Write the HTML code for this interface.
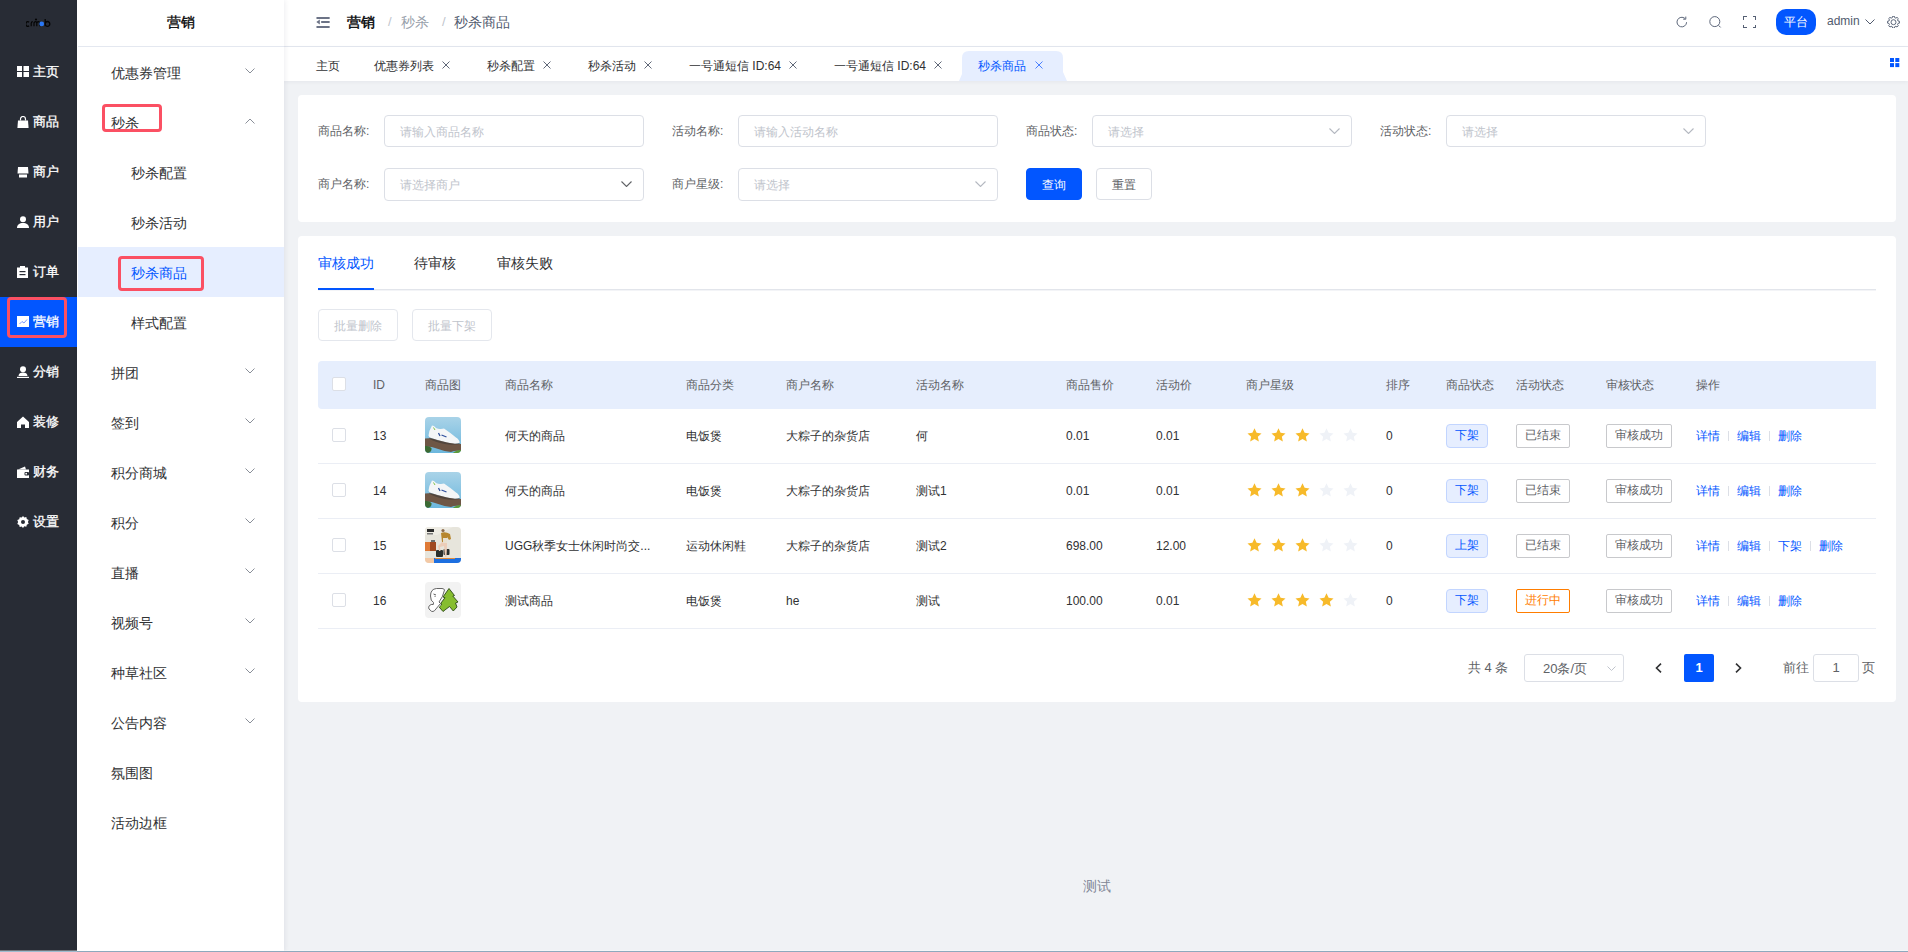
<!DOCTYPE html><html><head><meta charset="utf-8"><style>
*{box-sizing:border-box;margin:0;padding:0}
html,body{width:1908px;height:952px;overflow:hidden;background:#f0f2f5;font-family:"Liberation Sans",sans-serif;color:#303133}
.a{position:absolute;white-space:nowrap;line-height:1}
#nav1{position:absolute;left:0;top:0;width:77px;height:952px;background:#282c35}
#nav2{position:absolute;left:77px;top:0;width:207px;height:952px;background:#fff;box-shadow:1px 0 5px rgba(0,20,50,.07);z-index:2}
#hdr{position:absolute;left:284px;top:0;width:1624px;height:47px;background:#fff;border-bottom:1px solid #e4e8f0}
#tabs{position:absolute;left:284px;top:47px;width:1624px;height:34px;background:#fff;box-shadow:0 1px 4px rgba(0,20,60,.05);z-index:1}
.n1{position:absolute;left:0;width:77px;height:50px}
.n1 .tx{position:absolute;left:33px;top:18px;font-size:13px;color:#fff;line-height:13px;-webkit-text-stroke:0.3px #fff}
.n1 svg{position:absolute;left:17px;top:19px}
.n2{position:absolute;left:0;width:207px;height:50px}
.n2 .tx{position:absolute;left:34px;top:19px;font-size:14px;color:#303133;line-height:14px}
.n2 .sub{left:54px}
.arr{position:absolute;left:168px;top:21px}
.card{position:absolute;left:298px;width:1598px;background:#fff;border-radius:4px}
.lbl{position:absolute;font-size:12px;color:#606266;line-height:12px}
.inp{position:absolute;height:32px;width:260px;border:1px solid #dcdfe6;border-radius:4px;background:#fff}
.inp .ph{position:absolute;left:15px;top:10px;font-size:12px;color:#c0c4cc;line-height:12px}
.inp svg{position:absolute;right:11px;top:12px}
.btn{position:absolute;height:32px;width:56px;border-radius:4px;font-size:12px;line-height:32px;text-align:center}
.t12{position:absolute;font-size:12px;line-height:12px;white-space:nowrap}
.cb{position:absolute;width:14px;height:14px;border:1px solid #dcdfe6;border-radius:2px;background:#fff}
.img{position:absolute;width:36px;height:36px;border-radius:4px;overflow:hidden}
.tag{position:absolute;height:24px;border-radius:2px;font-size:12px;line-height:20px;text-align:center;border:1px solid}
.dv{position:absolute;width:1px;height:10px;background:#dcdfe6}
.rbox{position:absolute;border:3px solid #fb5063;border-radius:4px}
.tb{position:absolute;font-size:12px;line-height:12px;color:#303133;top:13px;white-space:nowrap}
.x{position:absolute;top:14px}
</style></head><body>
<div id="nav1">
<svg class="a" style="left:26px;top:18px" width="25" height="9" viewBox="0 0 25 9"><path d="M3 4.2A1.9 2.4 0 1 0 3 7.8" stroke="#050505" stroke-width="1.3" fill="none"/><path d="M5.2 8.2V5.2Q5.4 3.6 6.8 3.6" stroke="#050505" stroke-width="1.2" fill="none"/><path d="M8 8.2V4.2M8 5.2Q8.3 3.6 9.6 3.6Q10.8 3.6 10.8 5.2V8.2M10.8 5.2Q11.1 3.6 12.3 3.6Q13.6 3.6 13.6 5.2V8.2" stroke="#050505" stroke-width="1.2" fill="none"/><circle cx="10" cy="1.5" r="1.1" fill="#050505"/><circle cx="15.7" cy="5.9" r="2.4" fill="#2a78f5"/><path d="M19.2 1V8.2M19.2 5.9A2.3 2.4 0 1 0 23.8 5.9A2.3 2.4 0 1 0 19.2 5.9" stroke="#050505" stroke-width="1.3" fill="none"/></svg>
<div class="n1" style="top:47px"><svg width="12" height="11" viewBox="0 0 12 11"><rect x="0" y="0" width="5" height="5" fill="#fff"/><rect x="6.5" y="0" width="5.5" height="5" fill="#fff"/><rect x="0" y="6" width="5" height="5" fill="#fff"/><rect x="6.5" y="6" width="5.5" height="5" fill="#fff"/></svg><div class="tx">主页</div></div>
<div class="n1" style="top:97px"><svg width="12" height="12" viewBox="0 0 12 12"><path d="M3.5 4.5V3a2.5 2.5 0 0 1 5 0v1.5" stroke="#fff" stroke-width="1.2" fill="none"/><path d="M1 4.5h10l.6 7.5H.4z" fill="#fff"/></svg><div class="tx">商品</div></div>
<div class="n1" style="top:147px"><svg width="12" height="12" viewBox="0 0 12 12"><path d="M1 1h10l.5 6.5H.5z" fill="#fff"/><rect x="2" y="8.5" width="8" height="3" fill="#fff"/></svg><div class="tx">商户</div></div>
<div class="n1" style="top:197px"><svg width="12" height="12" viewBox="0 0 12 12"><circle cx="6" cy="3.2" r="3" fill="#fff"/><path d="M0 12c0-3.5 2.5-5 6-5s6 1.5 6 5z" fill="#fff"/></svg><div class="tx">用户</div></div>
<div class="n1" style="top:247px"><svg width="11" height="12" viewBox="0 0 11 12"><path d="M0 1.5h11V12H0z" fill="#fff"/><rect x="3" y="0" width="5" height="2.5" fill="#fff"/><rect x="2.5" y="5" width="6" height="1.2" fill="#282c35"/><rect x="2.5" y="8" width="6" height="1.2" fill="#282c35"/></svg><div class="tx">订单</div></div>
<div class="n1" style="top:297px;background:#0256ff"><svg width="12" height="11" viewBox="0 0 12 11"><rect width="12" height="11" fill="#fff"/><path d="M2.5 8l2.5-2.5 2 1.5 3-3.5" stroke="#6b8cff" stroke-width="0.9" fill="none"/></svg><div class="tx">营销</div></div>
<div class="n1" style="top:347px"><svg width="12" height="12" viewBox="0 0 12 12"><circle cx="6" cy="3.2" r="3" fill="#fff"/><path d="M1.5 10c0-2.5 2-3.5 4.5-3.5s4.5 1 4.5 3.5z" fill="#fff"/><rect x="0" y="10.8" width="12" height="1.2" fill="#fff"/></svg><div class="tx">分销</div></div>
<div class="n1" style="top:397px"><svg width="12" height="12" viewBox="0 0 12 12"><path d="M6 0.5L12 6v6H8V8.5H4V12H0V6z" fill="#fff"/></svg><div class="tx">装修</div></div>
<div class="n1" style="top:447px"><svg width="12" height="12" viewBox="0 0 12 12"><path d="M1 3.5l7-3 1 3z" fill="#fff"/><rect x="0" y="3.5" width="12" height="8.5" fill="#fff"/><rect x="7.5" y="6" width="4.5" height="3.5" rx="1" fill="#282c35"/><circle cx="9.2" cy="7.7" r="0.9" fill="#fff"/></svg><div class="tx">财务</div></div>
<div class="n1" style="top:497px"><svg width="12" height="12" viewBox="0 0 12 12"><path d="M6 0l1.3 1.5 2-.4.5 2 1.9.9-.8 1.9.8 1.9-1.9.9-.5 2-2-.4L6 12l-1.3-1.5-2 .4-.5-2L.3 8l.8-1.9L.3 4.1l1.9-.9.5-2 2 .4z" fill="#fff"/><circle cx="6" cy="6" r="2" fill="#282c35"/></svg><div class="tx">设置</div></div>
<div class="rbox" style="left:7px;top:297px;width:60px;height:41px"></div>
</div>
<div id="nav2">
<div class="a" style="left:0;width:207px;text-align:center;top:15px;font-size:14px;line-height:14px;color:#000;-webkit-text-stroke:0.3px #000">营销</div>
<div style="position:absolute;left:1px;top:46px;width:206px;height:1px;background:#e4e8f0"></div>
<div class="n2" style="top:47px"><div class="tx" style="left:34px">优惠券管理</div><svg class="arr" width="10" height="6" viewBox="0 0 10 6"><path d="M.5 .5L5 5 9.5 .5" stroke="#8a8f99" stroke-width="1" fill="none"/></svg></div>
<div class="n2" style="top:97px"><div class="tx" style="left:34px">秒杀</div><svg class="arr" width="10" height="6" viewBox="0 0 10 6"><path d="M.5 5.5L5 1 9.5 5.5" stroke="#8a8f99" stroke-width="1" fill="none"/></svg></div>
<div class="n2" style="top:147px"><div class="tx" style="left:54px">秒杀配置</div></div>
<div class="n2" style="top:197px"><div class="tx" style="left:54px">秒杀活动</div></div>
<div class="n2" style="top:247px;left:1px;width:206px;background:#e6eeff"><div class="tx" style="left:53px;color:#0256ff">秒杀商品</div></div>
<div class="n2" style="top:297px"><div class="tx" style="left:54px">样式配置</div></div>
<div class="n2" style="top:347px"><div class="tx" style="left:34px">拼团</div><svg class="arr" width="10" height="6" viewBox="0 0 10 6"><path d="M.5 .5L5 5 9.5 .5" stroke="#8a8f99" stroke-width="1" fill="none"/></svg></div>
<div class="n2" style="top:397px"><div class="tx" style="left:34px">签到</div><svg class="arr" width="10" height="6" viewBox="0 0 10 6"><path d="M.5 .5L5 5 9.5 .5" stroke="#8a8f99" stroke-width="1" fill="none"/></svg></div>
<div class="n2" style="top:447px"><div class="tx" style="left:34px">积分商城</div><svg class="arr" width="10" height="6" viewBox="0 0 10 6"><path d="M.5 .5L5 5 9.5 .5" stroke="#8a8f99" stroke-width="1" fill="none"/></svg></div>
<div class="n2" style="top:497px"><div class="tx" style="left:34px">积分</div><svg class="arr" width="10" height="6" viewBox="0 0 10 6"><path d="M.5 .5L5 5 9.5 .5" stroke="#8a8f99" stroke-width="1" fill="none"/></svg></div>
<div class="n2" style="top:547px"><div class="tx" style="left:34px">直播</div><svg class="arr" width="10" height="6" viewBox="0 0 10 6"><path d="M.5 .5L5 5 9.5 .5" stroke="#8a8f99" stroke-width="1" fill="none"/></svg></div>
<div class="n2" style="top:597px"><div class="tx" style="left:34px">视频号</div><svg class="arr" width="10" height="6" viewBox="0 0 10 6"><path d="M.5 .5L5 5 9.5 .5" stroke="#8a8f99" stroke-width="1" fill="none"/></svg></div>
<div class="n2" style="top:647px"><div class="tx" style="left:34px">种草社区</div><svg class="arr" width="10" height="6" viewBox="0 0 10 6"><path d="M.5 .5L5 5 9.5 .5" stroke="#8a8f99" stroke-width="1" fill="none"/></svg></div>
<div class="n2" style="top:697px"><div class="tx" style="left:34px">公告内容</div><svg class="arr" width="10" height="6" viewBox="0 0 10 6"><path d="M.5 .5L5 5 9.5 .5" stroke="#8a8f99" stroke-width="1" fill="none"/></svg></div>
<div class="n2" style="top:747px"><div class="tx" style="left:34px">氛围图</div></div>
<div class="n2" style="top:797px"><div class="tx" style="left:34px">活动边框</div></div>
<div class="rbox" style="left:25px;top:104px;width:60px;height:28px"></div>
<div class="rbox" style="left:41px;top:256px;width:86px;height:35px"></div>
</div>
<div id="hdr">
<svg class="a" style="left:32px;top:17px" width="14" height="11" viewBox="0 0 14 11"><rect x="0.3" y="0" width="13.5" height="2" rx=".8" fill="#6c7386"/><rect x="5" y="4" width="8.8" height="2" rx=".8" fill="#6c7386"/><rect x="0.3" y="9" width="13.5" height="2" rx=".8" fill="#6c7386"/><path d="M0.3 5L3.8 2.6v4.9z" fill="#6c7386"/></svg>
<div class="a" style="left:63px;top:15px;font-size:14px;line-height:14px;font-weight:bold;color:#17181a">营销</div>
<div class="a" style="left:104px;top:15px;font-size:13px;line-height:14px;color:#c0c4cc">/</div>
<div class="a" style="left:117px;top:15px;font-size:14px;line-height:14px;color:#97a0aa">秒杀</div>
<div class="a" style="left:158px;top:15px;font-size:13px;line-height:14px;color:#c0c4cc">/</div>
<div class="a" style="left:170px;top:15px;font-size:14px;line-height:14px;color:#515a6e">秒杀商品</div>
<svg class="a" style="left:1392px;top:16px" width="12" height="12" viewBox="0 0 12 12"><path d="M10.6 6.2A4.8 4.8 0 1 1 8.9 2.4" stroke="#556074" stroke-width="0.95" fill="none"/><path d="M9.8 .6v2.6H7.2" stroke="#556074" stroke-width="0.95" fill="none"/></svg>
<svg class="a" style="left:1425px;top:16px" width="13" height="12" viewBox="0 0 13 12"><circle cx="5.8" cy="5.6" r="5" stroke="#556074" stroke-width="0.95" fill="none"/><path d="M9.6 9.4l2 2" stroke="#556074" stroke-width="1"/></svg>
<svg class="a" style="left:1459px;top:16px" width="13" height="12" viewBox="0 0 13 12"><path d="M.5 3.5V.5H3.5M9.5 .5H12.5V3.5M12.5 8.5V11.5H9.5M3.5 11.5H.5V8.5" stroke="#556074" stroke-width="1" fill="none" shape-rendering="crispEdges"/></svg>
<div class="a" style="left:1492px;top:9px;width:40px;height:26px;border-radius:10px;background:#0256ff;color:#fff;font-size:12px;line-height:26px;text-align:center">平台</div>
<div class="a" style="left:1543px;top:15px;font-size:12px;line-height:12px;color:#515a6e">admin</div>
<svg class="a" style="left:1581px;top:19px" width="10" height="6" viewBox="0 0 10 6"><path d="M.5 .5L5 5 9.5 .5" stroke="#515a6e" stroke-width="1" fill="none"/></svg>
<svg class="a" style="left:1603px;top:16px" width="13" height="12" viewBox="0 0 13 12"><path d="M5.56 0.27 L7.44 0.27 L7.67 1.65 L8.89 2.15 L10.03 1.35 L11.35 2.67 L10.55 3.81 L11.05 5.03 L12.43 5.26 L12.43 7.14 L11.05 7.37 L10.55 8.59 L11.35 9.73 L10.03 11.05 L8.89 10.25 L7.67 10.75 L7.44 12.13 L5.56 12.13 L5.33 10.75 L4.11 10.25 L2.97 11.05 L1.65 9.73 L2.45 8.59 L1.95 7.37 L0.57 7.14 L0.57 5.26 L1.95 5.03 L2.45 3.81 L1.65 2.67 L2.97 1.35 L4.11 2.15 L5.33 1.65z" stroke="#556074" stroke-width="0.95" fill="none" stroke-linejoin="round"/><circle cx="6.5" cy="6.2" r="2.5" stroke="#556074" stroke-width="0.95" fill="none"/></svg>
</div>
<div id="tabs">
<svg class="a" style="left:673px;top:4px" width="112" height="30" viewBox="0 0 112 30"><path d="M2 30 L5 23 V7 Q5 0 12 0 H99 Q106 0 106 7 V21 L110 30 Z" fill="#e6eeff"/></svg>
<div class="tb" style="left:32px;color:#303133">主页</div>
<div class="tb" style="left:90px;color:#303133">优惠券列表</div>
<svg class="x" style="left:158px" width="8" height="8" viewBox="0 0 8 8"><path d="M.5 .5l7 7M7.5 .5l-7 7" stroke="#606878" stroke-width="1"/></svg>
<div class="tb" style="left:203px;color:#303133">秒杀配置</div>
<svg class="x" style="left:259px" width="8" height="8" viewBox="0 0 8 8"><path d="M.5 .5l7 7M7.5 .5l-7 7" stroke="#606878" stroke-width="1"/></svg>
<div class="tb" style="left:304px;color:#303133">秒杀活动</div>
<svg class="x" style="left:360px" width="8" height="8" viewBox="0 0 8 8"><path d="M.5 .5l7 7M7.5 .5l-7 7" stroke="#606878" stroke-width="1"/></svg>
<div class="tb" style="left:405px;color:#303133">一号通短信 ID:64</div>
<svg class="x" style="left:505px" width="8" height="8" viewBox="0 0 8 8"><path d="M.5 .5l7 7M7.5 .5l-7 7" stroke="#606878" stroke-width="1"/></svg>
<div class="tb" style="left:550px;color:#303133">一号通短信 ID:64</div>
<svg class="x" style="left:650px" width="8" height="8" viewBox="0 0 8 8"><path d="M.5 .5l7 7M7.5 .5l-7 7" stroke="#606878" stroke-width="1"/></svg>
<div class="tb" style="left:694px;color:#0256ff">秒杀商品</div>
<svg class="x" style="left:751px" width="8" height="8" viewBox="0 0 8 8"><path d="M.5 .5l7 7M7.5 .5l-7 7" stroke="#4a80ff" stroke-width="1"/></svg>
<svg class="a" style="left:1606px;top:11px" width="10" height="10" viewBox="0 0 10 10"><rect x="0" y="0" width="4" height="4" fill="#0256ff"/><rect x="5.3" y="0" width="4" height="4" fill="#0256ff"/><rect x="0" y="5.1" width="4" height="4" fill="#0256ff"/><rect x="5.3" y="5.1" width="4" height="4" fill="#0256ff"/></svg>
</div>
<div class="card" style="top:95px;height:127px"></div>
<div class="t12" style="left:318px;top:125px;color:#606266">商品名称:</div>
<div class="inp" style="left:384px;top:115px;height:32px"><div class="ph">请输入商品名称</div></div>
<div class="t12" style="left:672px;top:125px;color:#606266">活动名称:</div>
<div class="inp" style="left:738px;top:115px;height:32px"><div class="ph">请输入活动名称</div></div>
<div class="t12" style="left:1026px;top:125px;color:#606266">商品状态:</div>
<div class="inp" style="left:1092px;top:115px;height:32px"><div class="ph">请选择</div><svg width="11" height="6" viewBox="0 0 11 6"><path d="M.5 .5L5.5 5.5 10.5 .5" stroke="#b4b8c0" stroke-width="1.1" fill="none"/></svg></div>
<div class="t12" style="left:1380px;top:125px;color:#606266">活动状态:</div>
<div class="inp" style="left:1446px;top:115px;height:32px"><div class="ph">请选择</div><svg width="11" height="6" viewBox="0 0 11 6"><path d="M.5 .5L5.5 5.5 10.5 .5" stroke="#b4b8c0" stroke-width="1.1" fill="none"/></svg></div>
<div class="t12" style="left:318px;top:178px;color:#606266">商户名称:</div>
<div class="inp" style="left:384px;top:168px;height:33px"><div class="ph">请选择商户</div><svg width="11" height="6" viewBox="0 0 11 6"><path d="M.5 .5L5.5 5.5 10.5 .5" stroke="#606266" stroke-width="1.1" fill="none"/></svg></div>
<div class="t12" style="left:672px;top:178px;color:#606266">商户星级:</div>
<div class="inp" style="left:738px;top:168px;height:33px"><div class="ph">请选择</div><svg width="11" height="6" viewBox="0 0 11 6"><path d="M.5 .5L5.5 5.5 10.5 .5" stroke="#b4b8c0" stroke-width="1.1" fill="none"/></svg></div>
<div class="btn" style="left:1026px;top:168px;background:#0256ff;color:#fff;border:1px solid #0256ff">查询</div>
<div class="btn" style="left:1096px;top:168px;background:#fff;color:#606266;border:1px solid #dcdfe6">重置</div>
<div class="card" style="top:236px;height:466px"></div>
<div class="a" style="left:318px;top:256px;font-size:14px;line-height:14px;color:#0256ff">审核成功</div>
<div class="a" style="left:414px;top:256px;font-size:14px;line-height:14px;color:#303133">待审核</div>
<div class="a" style="left:497px;top:256px;font-size:14px;line-height:14px;color:#303133">审核失败</div>
<div class="a" style="left:318px;top:289px;width:1558px;height:1px;background:#e2e5eb"></div>
<div class="a" style="left:318px;top:290px;width:1558px;height:1px;background:#f3f4f7"></div>
<div class="a" style="left:318px;top:288px;width:56px;height:2px;background:#0256ff"></div>
<div class="btn" style="left:318px;top:309px;width:80px;background:#fff;color:#c0c4cc;border:1px solid #e4e7ed">批量删除</div>
<div class="btn" style="left:412px;top:309px;width:80px;background:#fff;color:#c0c4cc;border:1px solid #e4e7ed">批量下架</div>
<div class="a" style="left:318px;top:361px;width:1558px;height:48px;background:#e6eefd;border-radius:4px 0 0 4px"></div>
<div class="cb" style="left:332px;top:377px"></div>
<div class="t12" style="left:373px;top:379px;color:#606266">ID</div>
<div class="t12" style="left:425px;top:379px;color:#606266">商品图</div>
<div class="t12" style="left:505px;top:379px;color:#606266">商品名称</div>
<div class="t12" style="left:686px;top:379px;color:#606266">商品分类</div>
<div class="t12" style="left:786px;top:379px;color:#606266">商户名称</div>
<div class="t12" style="left:916px;top:379px;color:#606266">活动名称</div>
<div class="t12" style="left:1066px;top:379px;color:#606266">商品售价</div>
<div class="t12" style="left:1156px;top:379px;color:#606266">活动价</div>
<div class="t12" style="left:1246px;top:379px;color:#606266">商户星级</div>
<div class="t12" style="left:1386px;top:379px;color:#606266">排序</div>
<div class="t12" style="left:1446px;top:379px;color:#606266">商品状态</div>
<div class="t12" style="left:1516px;top:379px;color:#606266">活动状态</div>
<div class="t12" style="left:1606px;top:379px;color:#606266">审核状态</div>
<div class="t12" style="left:1696px;top:379px;color:#606266">操作</div>
<div class="cb" style="left:332px;top:428px"></div>
<div class="t12" style="left:373px;top:430px">13</div>
<div class="img" style="left:425px;top:417px"><svg width="36" height="36" viewBox="0 0 36 36"><defs><linearGradient id="sk" x1="0" y1="0" x2="0" y2="1"><stop offset="0" stop-color="#a9d3e8"/><stop offset="1" stop-color="#6cb7dd"/></linearGradient></defs><rect width="36" height="36" fill="url(#sk)"/><path d="M0 21.5 Q8 20.5 17 23.5 Q27 26.5 36 27 V34 Q30 33 26 35 Q18 34 10 31 Q5 29 0 30z" fill="#6e5645"/><path d="M0 29 Q4 28.5 6.5 31 Q7 35 3 36 H0z" fill="#3b6a33"/><path d="M29 35 Q33 32.5 36 33 V36 H28z" fill="#5d9a3a"/><path d="M3.5 18.5 Q4 13.5 7 8.5 L9 9 Q11.5 12.5 16 12 L19 11.5 Q25 15.5 31 20.5 Q35 23 34.5 26 Q30 27.5 22 25.5 Q12 23.5 4.5 20.5z" fill="#f4f6f7"/><path d="M4.5 20.5 Q14 23.5 22 25.5 Q30 27.5 34.5 26 L34.5 27 Q28 28.5 20 27 Q10 25 4 21.5z" fill="#333" opacity=".5"/><path d="M13.5 16 L15 19 M16.5 18 L21.5 20" stroke="#2f4f9c" stroke-width="1.3"/><path d="M8.5 10.5 L10 13" stroke="#7fc24a" stroke-width="1"/></svg></div>
<div class="t12" style="left:505px;top:430px">何天的商品</div>
<div class="t12" style="left:686px;top:430px">电饭煲</div>
<div class="t12" style="left:786px;top:430px">大粽子的杂货店</div>
<div class="t12" style="left:916px;top:430px">何</div>
<div class="t12" style="left:1066px;top:430px">0.01</div>
<div class="t12" style="left:1156px;top:430px">0.01</div>
<svg class="a" style="left:1247px;top:428px" width="15" height="15" viewBox="1 1 22 22"><path d="M12 1.5l3.1 6.6 7.2.8-5.4 4.9 1.5 7.1L12 17.3l-6.4 3.6 1.5-7.1L1.7 8.9l7.2-.8z" fill="#f7ba2a"/></svg>
<svg class="a" style="left:1271px;top:428px" width="15" height="15" viewBox="1 1 22 22"><path d="M12 1.5l3.1 6.6 7.2.8-5.4 4.9 1.5 7.1L12 17.3l-6.4 3.6 1.5-7.1L1.7 8.9l7.2-.8z" fill="#f7ba2a"/></svg>
<svg class="a" style="left:1295px;top:428px" width="15" height="15" viewBox="1 1 22 22"><path d="M12 1.5l3.1 6.6 7.2.8-5.4 4.9 1.5 7.1L12 17.3l-6.4 3.6 1.5-7.1L1.7 8.9l7.2-.8z" fill="#f7ba2a"/></svg>
<svg class="a" style="left:1319px;top:428px" width="15" height="15" viewBox="1 1 22 22"><path d="M12 1.5l3.1 6.6 7.2.8-5.4 4.9 1.5 7.1L12 17.3l-6.4 3.6 1.5-7.1L1.7 8.9l7.2-.8z" fill="#eff2f7"/></svg>
<svg class="a" style="left:1343px;top:428px" width="15" height="15" viewBox="1 1 22 22"><path d="M12 1.5l3.1 6.6 7.2.8-5.4 4.9 1.5 7.1L12 17.3l-6.4 3.6 1.5-7.1L1.7 8.9l7.2-.8z" fill="#eff2f7"/></svg>
<div class="t12" style="left:1386px;top:430px">0</div>
<div class="tag" style="left:1446px;top:424px;width:42px;background:#e6eeff;border-color:#c2d5ff;border-radius:4px;color:#0256ff">下架</div>
<div class="tag" style="left:1516px;top:424px;width:54px;background:#fff;border-color:#c8c9cc;color:#606266">已结束</div>
<div class="tag" style="left:1606px;top:424px;width:66px;background:#fff;border-color:#c8c9cc;color:#606266">审核成功</div>
<div class="t12" style="left:1696px;top:430px;color:#0256ff">详情</div>
<div class="dv" style="left:1728px;top:431px"></div>
<div class="t12" style="left:1737px;top:430px;color:#0256ff">编辑</div>
<div class="dv" style="left:1769px;top:431px"></div>
<div class="t12" style="left:1778px;top:430px;color:#0256ff">删除</div>
<div class="a" style="left:318px;top:463px;width:1558px;height:1px;background:#ebeef5"></div>
<div class="cb" style="left:332px;top:483px"></div>
<div class="t12" style="left:373px;top:485px">14</div>
<div class="img" style="left:425px;top:472px"><svg width="36" height="36" viewBox="0 0 36 36"><defs><linearGradient id="sk" x1="0" y1="0" x2="0" y2="1"><stop offset="0" stop-color="#a9d3e8"/><stop offset="1" stop-color="#6cb7dd"/></linearGradient></defs><rect width="36" height="36" fill="url(#sk)"/><path d="M0 21.5 Q8 20.5 17 23.5 Q27 26.5 36 27 V34 Q30 33 26 35 Q18 34 10 31 Q5 29 0 30z" fill="#6e5645"/><path d="M0 29 Q4 28.5 6.5 31 Q7 35 3 36 H0z" fill="#3b6a33"/><path d="M29 35 Q33 32.5 36 33 V36 H28z" fill="#5d9a3a"/><path d="M3.5 18.5 Q4 13.5 7 8.5 L9 9 Q11.5 12.5 16 12 L19 11.5 Q25 15.5 31 20.5 Q35 23 34.5 26 Q30 27.5 22 25.5 Q12 23.5 4.5 20.5z" fill="#f4f6f7"/><path d="M4.5 20.5 Q14 23.5 22 25.5 Q30 27.5 34.5 26 L34.5 27 Q28 28.5 20 27 Q10 25 4 21.5z" fill="#333" opacity=".5"/><path d="M13.5 16 L15 19 M16.5 18 L21.5 20" stroke="#2f4f9c" stroke-width="1.3"/><path d="M8.5 10.5 L10 13" stroke="#7fc24a" stroke-width="1"/></svg></div>
<div class="t12" style="left:505px;top:485px">何天的商品</div>
<div class="t12" style="left:686px;top:485px">电饭煲</div>
<div class="t12" style="left:786px;top:485px">大粽子的杂货店</div>
<div class="t12" style="left:916px;top:485px">测试1</div>
<div class="t12" style="left:1066px;top:485px">0.01</div>
<div class="t12" style="left:1156px;top:485px">0.01</div>
<svg class="a" style="left:1247px;top:483px" width="15" height="15" viewBox="1 1 22 22"><path d="M12 1.5l3.1 6.6 7.2.8-5.4 4.9 1.5 7.1L12 17.3l-6.4 3.6 1.5-7.1L1.7 8.9l7.2-.8z" fill="#f7ba2a"/></svg>
<svg class="a" style="left:1271px;top:483px" width="15" height="15" viewBox="1 1 22 22"><path d="M12 1.5l3.1 6.6 7.2.8-5.4 4.9 1.5 7.1L12 17.3l-6.4 3.6 1.5-7.1L1.7 8.9l7.2-.8z" fill="#f7ba2a"/></svg>
<svg class="a" style="left:1295px;top:483px" width="15" height="15" viewBox="1 1 22 22"><path d="M12 1.5l3.1 6.6 7.2.8-5.4 4.9 1.5 7.1L12 17.3l-6.4 3.6 1.5-7.1L1.7 8.9l7.2-.8z" fill="#f7ba2a"/></svg>
<svg class="a" style="left:1319px;top:483px" width="15" height="15" viewBox="1 1 22 22"><path d="M12 1.5l3.1 6.6 7.2.8-5.4 4.9 1.5 7.1L12 17.3l-6.4 3.6 1.5-7.1L1.7 8.9l7.2-.8z" fill="#eff2f7"/></svg>
<svg class="a" style="left:1343px;top:483px" width="15" height="15" viewBox="1 1 22 22"><path d="M12 1.5l3.1 6.6 7.2.8-5.4 4.9 1.5 7.1L12 17.3l-6.4 3.6 1.5-7.1L1.7 8.9l7.2-.8z" fill="#eff2f7"/></svg>
<div class="t12" style="left:1386px;top:485px">0</div>
<div class="tag" style="left:1446px;top:479px;width:42px;background:#e6eeff;border-color:#c2d5ff;border-radius:4px;color:#0256ff">下架</div>
<div class="tag" style="left:1516px;top:479px;width:54px;background:#fff;border-color:#c8c9cc;color:#606266">已结束</div>
<div class="tag" style="left:1606px;top:479px;width:66px;background:#fff;border-color:#c8c9cc;color:#606266">审核成功</div>
<div class="t12" style="left:1696px;top:485px;color:#0256ff">详情</div>
<div class="dv" style="left:1728px;top:486px"></div>
<div class="t12" style="left:1737px;top:485px;color:#0256ff">编辑</div>
<div class="dv" style="left:1769px;top:486px"></div>
<div class="t12" style="left:1778px;top:485px;color:#0256ff">删除</div>
<div class="a" style="left:318px;top:518px;width:1558px;height:1px;background:#ebeef5"></div>
<div class="cb" style="left:332px;top:538px"></div>
<div class="t12" style="left:373px;top:540px">15</div>
<div class="img" style="left:425px;top:527px"><svg width="36" height="36" viewBox="0 0 36 36"><rect width="36" height="36" fill="#e7e5dc"/><path d="M0 0 H28 L12 8 H0z" fill="#eeece4"/><rect x="2" y="2" width="7" height="3" fill="#2a2a2a"/><rect x="2" y="6" width="6" height="1.5" fill="#777"/><rect x="0" y="15" width="11" height="9" fill="#a04a22"/><rect x="0" y="15" width="5" height="9" fill="#df7a36"/><rect x="6" y="13" width="4" height="2" fill="#6a7070"/><rect x="11" y="23" width="7" height="7" rx="1" fill="#2b2f2c"/><rect x="18.5" y="22" width="6" height="6" rx="1" fill="#2b2f2c"/><path d="M16 6 Q20 4 25 7 L26 12 L24 13 L22 10 L22 15 L17 15z" fill="#b7862c"/><circle cx="18" cy="3.5" r="1.6" fill="#8a6a4a"/><path d="M17 15 L22 15 L22 19 L21.5 30 L20 30 L19 19 L15 20 L15.5 24 L14 24 L13 19z" fill="#eccdb8"/><rect x="18" y="11" width="4" height="5" fill="#e9e1cf"/><rect x="0" y="31" width="9" height="5" fill="#f3c9a6"/><rect x="9" y="31" width="27" height="5" fill="#1d6fe0"/><rect x="10" y="31" width="20" height="1" fill="#e08a3a"/></svg></div>
<div class="t12" style="left:505px;top:540px">UGG秋季女士休闲时尚交...</div>
<div class="t12" style="left:686px;top:540px">运动休闲鞋</div>
<div class="t12" style="left:786px;top:540px">大粽子的杂货店</div>
<div class="t12" style="left:916px;top:540px">测试2</div>
<div class="t12" style="left:1066px;top:540px">698.00</div>
<div class="t12" style="left:1156px;top:540px">12.00</div>
<svg class="a" style="left:1247px;top:538px" width="15" height="15" viewBox="1 1 22 22"><path d="M12 1.5l3.1 6.6 7.2.8-5.4 4.9 1.5 7.1L12 17.3l-6.4 3.6 1.5-7.1L1.7 8.9l7.2-.8z" fill="#f7ba2a"/></svg>
<svg class="a" style="left:1271px;top:538px" width="15" height="15" viewBox="1 1 22 22"><path d="M12 1.5l3.1 6.6 7.2.8-5.4 4.9 1.5 7.1L12 17.3l-6.4 3.6 1.5-7.1L1.7 8.9l7.2-.8z" fill="#f7ba2a"/></svg>
<svg class="a" style="left:1295px;top:538px" width="15" height="15" viewBox="1 1 22 22"><path d="M12 1.5l3.1 6.6 7.2.8-5.4 4.9 1.5 7.1L12 17.3l-6.4 3.6 1.5-7.1L1.7 8.9l7.2-.8z" fill="#f7ba2a"/></svg>
<svg class="a" style="left:1319px;top:538px" width="15" height="15" viewBox="1 1 22 22"><path d="M12 1.5l3.1 6.6 7.2.8-5.4 4.9 1.5 7.1L12 17.3l-6.4 3.6 1.5-7.1L1.7 8.9l7.2-.8z" fill="#eff2f7"/></svg>
<svg class="a" style="left:1343px;top:538px" width="15" height="15" viewBox="1 1 22 22"><path d="M12 1.5l3.1 6.6 7.2.8-5.4 4.9 1.5 7.1L12 17.3l-6.4 3.6 1.5-7.1L1.7 8.9l7.2-.8z" fill="#eff2f7"/></svg>
<div class="t12" style="left:1386px;top:540px">0</div>
<div class="tag" style="left:1446px;top:534px;width:42px;background:#e6eeff;border-color:#c2d5ff;border-radius:4px;color:#0256ff">上架</div>
<div class="tag" style="left:1516px;top:534px;width:54px;background:#fff;border-color:#c8c9cc;color:#606266">已结束</div>
<div class="tag" style="left:1606px;top:534px;width:66px;background:#fff;border-color:#c8c9cc;color:#606266">审核成功</div>
<div class="t12" style="left:1696px;top:540px;color:#0256ff">详情</div>
<div class="dv" style="left:1728px;top:541px"></div>
<div class="t12" style="left:1737px;top:540px;color:#0256ff">编辑</div>
<div class="dv" style="left:1769px;top:541px"></div>
<div class="t12" style="left:1778px;top:540px;color:#0256ff">下架</div>
<div class="dv" style="left:1810px;top:541px"></div>
<div class="t12" style="left:1819px;top:540px;color:#0256ff">删除</div>
<div class="a" style="left:318px;top:573px;width:1558px;height:1px;background:#ebeef5"></div>
<div class="cb" style="left:332px;top:593px"></div>
<div class="t12" style="left:373px;top:595px">16</div>
<div class="img" style="left:425px;top:582px"><svg width="36" height="36" viewBox="0 0 36 36"><rect width="36" height="36" fill="#f2f2f2"/><path d="M19.5 8 Q19 6.5 17 6.5 H11.5 Q5.5 7 5.5 14 Q5.5 19 8.5 20.5 L8.3 22.5 Q6 22 4.5 23.5 Q3 25 4 27 L6.5 29.3 Q8 30 9.5 28.7 L15.5 21.5 L14 20 Q18 15 19.5 8z" fill="#fff" stroke="#555" stroke-width="0.9"/><path d="M8.5 12 L11 13 M9.5 14.3 L10.5 14.5" stroke="#333" stroke-width="0.8"/><path d="M24 6.5 L29.5 13.5 L27.8 14 L33 20 L30.5 21 L32 25 L28.3 29 L24.5 24.5 L18 29.5 L14.3 25.2 L16.5 23 L16 21 L20 15.7 L18 15z" fill="#86bd2f" stroke="#2d4a17" stroke-width="0.9" stroke-linejoin="round"/></svg></div>
<div class="t12" style="left:505px;top:595px">测试商品</div>
<div class="t12" style="left:686px;top:595px">电饭煲</div>
<div class="t12" style="left:786px;top:595px">he</div>
<div class="t12" style="left:916px;top:595px">测试</div>
<div class="t12" style="left:1066px;top:595px">100.00</div>
<div class="t12" style="left:1156px;top:595px">0.01</div>
<svg class="a" style="left:1247px;top:593px" width="15" height="15" viewBox="1 1 22 22"><path d="M12 1.5l3.1 6.6 7.2.8-5.4 4.9 1.5 7.1L12 17.3l-6.4 3.6 1.5-7.1L1.7 8.9l7.2-.8z" fill="#f7ba2a"/></svg>
<svg class="a" style="left:1271px;top:593px" width="15" height="15" viewBox="1 1 22 22"><path d="M12 1.5l3.1 6.6 7.2.8-5.4 4.9 1.5 7.1L12 17.3l-6.4 3.6 1.5-7.1L1.7 8.9l7.2-.8z" fill="#f7ba2a"/></svg>
<svg class="a" style="left:1295px;top:593px" width="15" height="15" viewBox="1 1 22 22"><path d="M12 1.5l3.1 6.6 7.2.8-5.4 4.9 1.5 7.1L12 17.3l-6.4 3.6 1.5-7.1L1.7 8.9l7.2-.8z" fill="#f7ba2a"/></svg>
<svg class="a" style="left:1319px;top:593px" width="15" height="15" viewBox="1 1 22 22"><path d="M12 1.5l3.1 6.6 7.2.8-5.4 4.9 1.5 7.1L12 17.3l-6.4 3.6 1.5-7.1L1.7 8.9l7.2-.8z" fill="#f7ba2a"/></svg>
<svg class="a" style="left:1343px;top:593px" width="15" height="15" viewBox="1 1 22 22"><path d="M12 1.5l3.1 6.6 7.2.8-5.4 4.9 1.5 7.1L12 17.3l-6.4 3.6 1.5-7.1L1.7 8.9l7.2-.8z" fill="#eff2f7"/></svg>
<div class="t12" style="left:1386px;top:595px">0</div>
<div class="tag" style="left:1446px;top:589px;width:42px;background:#e6eeff;border-color:#c2d5ff;border-radius:4px;color:#0256ff">下架</div>
<div class="tag" style="left:1516px;top:589px;width:54px;background:#fff;border-color:#ff7d00;color:#ff7d00">进行中</div>
<div class="tag" style="left:1606px;top:589px;width:66px;background:#fff;border-color:#c8c9cc;color:#606266">审核成功</div>
<div class="t12" style="left:1696px;top:595px;color:#0256ff">详情</div>
<div class="dv" style="left:1728px;top:596px"></div>
<div class="t12" style="left:1737px;top:595px;color:#0256ff">编辑</div>
<div class="dv" style="left:1769px;top:596px"></div>
<div class="t12" style="left:1778px;top:595px;color:#0256ff">删除</div>
<div class="a" style="left:318px;top:628px;width:1558px;height:1px;background:#ebeef5"></div>
<div class="a" style="left:1468px;top:661px;font-size:13px;line-height:13px;color:#606266">共 4 条</div>
<div class="a" style="left:1524px;top:654px;width:100px;height:28px;border:1px solid #dcdfe6;border-radius:3px;background:#fff"><div class="a" style="left:18px;top:7px;font-size:13px;line-height:13px;color:#606266">20条/页</div><svg class="a" style="left:82px;top:11px" width="9" height="5" viewBox="0 0 9 5"><path d="M.5 .5L4.5 4.5 8.5 .5" stroke="#c0c4cc" stroke-width="1" fill="none"/></svg></div>
<svg class="a" style="left:1655px;top:663px" width="7" height="10" viewBox="0 0 7 10"><path d="M6 .7L1.5 5 6 9.3" stroke="#303133" stroke-width="1.6" fill="none"/></svg>
<div class="a" style="left:1684px;top:654px;width:30px;height:28px;border-radius:2px;background:#0256ff;color:#fff;font-size:13px;font-weight:bold;line-height:28px;text-align:center">1</div>
<svg class="a" style="left:1735px;top:663px" width="7" height="10" viewBox="0 0 7 10"><path d="M1 .7L5.5 5 1 9.3" stroke="#303133" stroke-width="1.6" fill="none"/></svg>
<div class="a" style="left:1783px;top:661px;font-size:13px;line-height:13px;color:#606266">前往</div>
<div class="a" style="left:1813px;top:654px;width:46px;height:28px;border:1px solid #dcdfe6;border-radius:3px;background:#fff;font-size:13px;line-height:26px;text-align:center;color:#606266">1</div>
<div class="a" style="left:1862px;top:661px;font-size:13px;line-height:13px;color:#606266">页</div>
<div class="a" style="left:1083px;top:879px;font-size:14px;line-height:14px;color:#808695">测试</div>
<div class="a" style="left:0;top:950px;width:1908px;height:1px;background:rgba(255,255,255,.35);z-index:5"></div>
<div class="a" style="left:0;top:951px;width:1908px;height:1px;background:#8ea9bd;z-index:5"></div>
<div class="a" style="left:0;top:951px;width:77px;height:1px;background:#9fbccf;z-index:6"></div>
</body></html>
